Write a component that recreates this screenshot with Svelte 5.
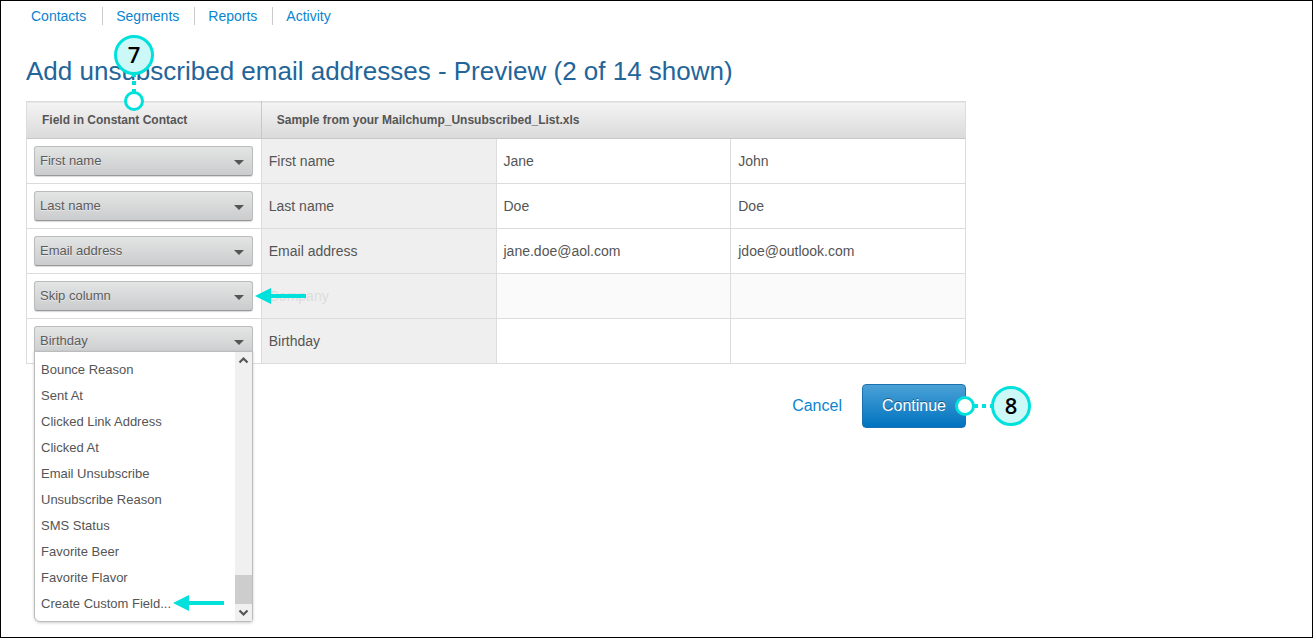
<script lang="ts">
  type Row = {
    id: string;
    field: string;
    sample: string[];
    skipped?: boolean;
    open?: boolean;
  };

  const navItems = ["Contacts", "Segments", "Reports", "Activity"];

  const menuFields = [
    "Bounce Reason",
    "Sent At",
    "Clicked Link Address",
    "Clicked At",
    "Email Unsubscribe",
    "Unsubscribe Reason",
    "SMS Status",
    "Favorite Beer",
    "Favorite Flavor",
    "Create Custom Field..."
  ];

  const baseFields = ["First name", "Last name", "Email address", "Skip column", "Birthday"];

  let rows = $state<Row[]>([
    { id: "first", field: "First name", sample: ["First name", "Jane", "John"] },
    { id: "last", field: "Last name", sample: ["Last name", "Doe", "Doe"] },
    { id: "email", field: "Email address", sample: ["Email address", "jane.doe@aol.com", "jdoe@outlook.com"] },
    { id: "company", field: "Skip column", sample: ["Company", "", ""], skipped: true },
    { id: "birthday", field: "Birthday", sample: ["Birthday", "", ""], open: true }
  ]);

  function choose(row: Row, field: string) {
    row.field = field;
    row.open = false;
  }
</script>

{#snippet arrow()}
  <svg class="arrow" viewBox="0 0 51 16" aria-hidden="true">
    <path d="M0 8L16 0V6H51V10H16V16Z" fill="#00e1dc" />
  </svg>
{/snippet}

<div class="page">
  <nav>
    <ul>
      {#each navItems as item}
        <li><a href={`#${item.toLowerCase()}`}>{item}</a></li>
      {/each}
    </ul>
  </nav>

  <main>
    <h1>Add unsubscribed email addresses - Preview (2 of 14 shown)</h1>

    <table>
      <thead>
        <tr>
          <th scope="col">
            Field in Constant Contact
            <svg class="callout callout-top" viewBox="0 0 40 76">
              <path d="M20 38V58" stroke="#00e1dc" stroke-width="4" stroke-dasharray="4 4" />
              <circle cx="20" cy="20" r="18.5" fill="#ccf8f7" stroke="#00e1dc" stroke-width="3" />
              <circle cx="20" cy="66" r="8.5" fill="#fff" stroke="#00e1dc" stroke-width="3" />
              <text x="20" y="28" text-anchor="middle">7</text>
            </svg>
          </th>
          <th scope="col" colspan="3">Sample from your Mailchump_Unsubscribed_List.xls</th>
        </tr>
      </thead>
      <tbody>
        {#each rows as row (row.id)}
          <tr class:skipped={row.skipped}>
            <td class="field-cell">
              <div class="field">
                <select aria-label={`Field for ${row.sample[0]}`} bind:value={row.field}>
                  {#each [...baseFields, ...menuFields] as field}
                    <option value={field}>{field}</option>
                  {/each}
                </select>
                <svg class="caret" viewBox="0 0 10 5" aria-hidden="true">
                  <path d="M0 0H10L5 5Z" fill="#555" />
                </svg>

                {#if row.open}
                  <div class="menu">
                    <div class="options">
                      {#each menuFields as field}
                        <button type="button" onclick={() => choose(row, field)}>{field}</button>
                      {/each}
                    </div>
                    <div class="scrollbar" aria-hidden="true">
                      <svg viewBox="0 0 17 17">
                        <path d="M4.5 10.5L8.5 6.5L12.5 10.5" fill="none" stroke="#555" stroke-width="2.2" />
                      </svg>
                      <div class="thumb"></div>
                      <svg viewBox="0 0 17 17">
                        <path d="M4.5 6.5L8.5 10.5L12.5 6.5" fill="none" stroke="#555" stroke-width="2.2" />
                      </svg>
                    </div>
                    <div class="menu-arrow">{@render arrow()}</div>
                  </div>
                {/if}
                {#if row.skipped}
                  <div class="row-arrow">{@render arrow()}</div>
                {/if}
              </div>
            </td>
            {#each row.sample as value, i}
              <td class:source={i === 0}>{value}</td>
            {/each}
          </tr>
        {/each}
      </tbody>
    </table>

    <div class="actions">
      <a href="#cancel">Cancel</a>
      <div class="continue">
        <button type="button">Continue</button>
        <svg class="callout callout-side" viewBox="0 0 76 40">
          <path d="M19 20H38" stroke="#00e1dc" stroke-width="4" stroke-dasharray="4 4" />
          <circle cx="10" cy="20" r="8.5" fill="#fff" stroke="#00e1dc" stroke-width="3" />
          <circle cx="56" cy="20" r="18.5" fill="#ccf8f7" stroke="#00e1dc" stroke-width="3" />
          <text x="56" y="28" text-anchor="middle">8</text>
        </svg>
      </div>
    </div>
  </main>
</div>

<style>
  :global(body) {
    background: #fff;
  }

  .page {
    box-sizing: border-box;
    min-height: 100vh;
    padding: 6px 25px;
    border: 1px solid #000;
    font-family: "Liberation Sans", Arial, sans-serif;
    font-size: 14px;
    color: #555;
  }

  a {
    color: #0a85d0;
    text-decoration: none;
  }

  a:hover {
    text-decoration: underline;
  }

  ul {
    display: flex;
    margin: 0;
    padding: 0;
    list-style: none;
  }

  li {
    padding: 0 15px 0 13px;
    border-right: 1px solid #ccc;
    line-height: 18px;
  }

  li:first-child {
    padding: 0 16px 0 5px;
  }

  li:last-child {
    border-right: 0;
  }

  main {
    max-width: 940px;
  }

  h1 {
    margin: 30px 0 14px;
    font-size: 26px;
    font-weight: 400;
    line-height: 32px;
    color: #236599;
  }

  table {
    width: 100%;
    table-layout: fixed;
    border-collapse: collapse;
  }

  th,
  td {
    box-sizing: border-box;
    border: 1px solid #dcdcdc;
    text-align: left;
  }

  th {
    position: relative;
    height: 37px;
    padding: 0 15px;
    border-bottom-color: #c8c8c8;
    background: linear-gradient(#f4f4f4, #dadada);
    font-size: 12px;
    color: #555;
  }

  th:first-child {
    border-right-color: #c8c8c8;
  }

  td {
    height: 45px;
    padding: 0 7px;
  }

  td.field-cell {
    padding-right: 8px;
  }

  td.source {
    background: #efefef;
  }

  .skipped td {
    background: #fafafa;
    color: #ddd;
  }

  .skipped td.source {
    background: #efefef;
  }

  .skipped td.field-cell {
    background: #fff;
  }

  .field {
    position: relative;
  }

  select {
    display: block;
    box-sizing: border-box;
    width: 100%;
    height: 30px;
    padding: 0 24px 2px 5px;
    border: 1px solid #bcbcbc;
    border-bottom-color: #999;
    border-radius: 3px;
    appearance: none;
    background: linear-gradient(#e3e4e4, #cbcccd);
    box-shadow: 0 1px 1px rgba(0, 0, 0, 0.15);
    font: inherit;
    font-size: 13px;
    color: #5c5c5c;
    text-shadow: 0 1px 0 rgba(255, 255, 255, 0.5);
  }

  .caret {
    position: absolute;
    top: 14px;
    right: 9px;
    width: 10px;
    height: 5px;
    pointer-events: none;
  }

  .menu {
    position: absolute;
    z-index: 1;
    top: 25px;
    left: 0;
    right: 0;
    display: flex;
    border: 1px solid #bcbcbc;
    border-radius: 0 0 3px 6px;
    background: #fff;
    box-shadow: 0 1px 3px rgba(0, 0, 0, 0.2);
  }

  .options {
    flex: 1;
    display: grid;
    padding: 4px 0 5px;
  }

  .options button {
    height: 26px;
    padding: 0 6px;
    border: 0;
    background: transparent;
    font: inherit;
    font-size: 13px;
    text-align: left;
    color: #555;
    cursor: pointer;
  }

  .options button:hover {
    background: #eee;
  }

  .scrollbar {
    display: flex;
    flex-direction: column;
    width: 17px;
    background: #f0f0f0;
  }

  .scrollbar svg {
    width: 17px;
    height: 17px;
  }

  .thumb {
    height: 29px;
    margin-top: auto;
    background: #cdcdcd;
  }

  .arrow {
    display: block;
    width: 51px;
    height: 16px;
  }

  .menu-arrow,
  .row-arrow {
    position: absolute;
    z-index: 1;
    pointer-events: none;
  }

  .menu-arrow {
    right: 28px;
    bottom: 10px;
  }

  .row-arrow {
    top: 7px;
    left: 100%;
    padding-left: 2px;
  }

  .actions {
    display: flex;
    justify-content: flex-end;
    align-items: center;
    gap: 20px;
    margin-top: 20px;
    font-size: 16px;
  }

  .continue {
    position: relative;
  }

  .continue button {
    display: block;
    height: 44px;
    padding: 0 19px;
    border: 1px solid #1b72ae;
    border-radius: 4px;
    background: linear-gradient(#4ba1d6, #0073c0);
    font: inherit;
    color: #fff;
    text-shadow: 0 -1px 0 rgba(0, 0, 0, 0.4);
    cursor: pointer;
  }

  .callout {
    position: absolute;
    z-index: 2;
    pointer-events: none;
  }

  .callout text {
    font-family: "Open Sans", sans-serif;
    font-size: 22px;
    font-weight: 600;
    fill: #000;
  }

  .callout-top {
    bottom: 27px;
    left: 87px;
    width: 40px;
    height: 76px;
  }

  .callout-side {
    top: 2px;
    left: calc(100% - 11px);
    width: 76px;
    height: 40px;
  }
</style>
